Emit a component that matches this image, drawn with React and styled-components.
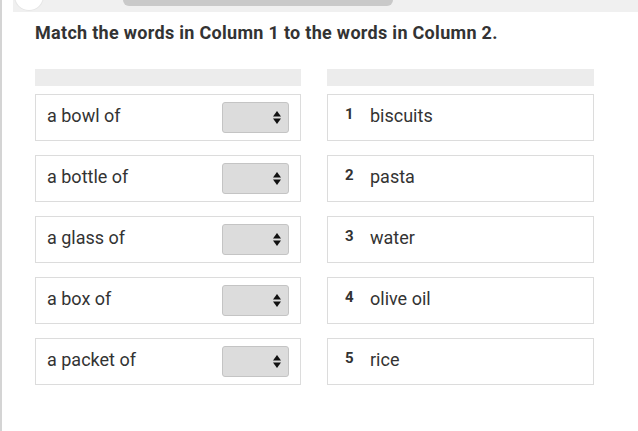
import React from 'react';
import styled, { createGlobalStyle } from 'styled-components';

const GlobalStyle = createGlobalStyle`
  html, body {
    margin: 0;
    padding: 0;
    background: #fff;
    font-family: Roboto, "Liberation Sans", Arial, sans-serif;
  }
`;

const Page = styled.div`
  height: 431px;
  overflow: hidden;
  border-left: 2px solid #d4d4d4;
  box-sizing: border-box;
`;

const TopBand = styled.div`
  position: relative;
  height: 12px;
  margin-left: 11px;
  background: #f0f0f0;
`;

const Pill = styled.div`
  position: absolute;
  left: 110px;
  top: 0;
  width: 270px;
  height: 6px;
  background: #c9c9c9;
  border-radius: 0 0 6px 6px;
`;

const Circle = styled.div`
  position: absolute;
  left: 2px;
  top: -18px;
  width: 28px;
  height: 28px;
  border-radius: 50%;
  background: #fff;
  box-shadow: 0 0 0 1px #e6e6e6;
`;

const Content = styled.div`
  padding-left: 33px;
  width: 559px;
`;

const Title = styled.h1`
  margin: 11px 0 26px;
  font-size: 18px;
  line-height: 20px;
  letter-spacing: 0.3px;
  font-weight: 700;
  color: #333;
`;

const Columns = styled.div`
  display: grid;
  grid-template-columns: 266px 267px;
  column-gap: 26px;
`;

const Column = styled.div`
  display: flex;
  flex-direction: column;
  gap: 14px;
`;

const Header = styled.div`
  height: 17px;
  background: #ececec;
  margin-bottom: -6px;
`;

const Item = styled.div`
  height: 47px;
  box-sizing: border-box;
  border: 1px solid #dcdcdc;
  display: flex;
  align-items: center;
  padding: 0 11px 0 ${p => p.$pad}px;
  font-size: 18px;
  color: #333;
`;

const Label = styled.span`
  flex: 1;
  margin-top: -5px;
`;

const Select = styled.div`
  width: 67px;
  height: 31px;
  box-sizing: border-box;
  background: #dcdcdc;
  border: 1px solid #c4c4c4;
  border-radius: 3px;
  display: flex;
  align-items: center;
  justify-content: flex-end;
  padding-right: 7px;
`;

const Num = styled.span`
  width: 25px;
  font-size: 15px;
  font-weight: 700;
  color: #333;
  margin-top: -8px;
`;

const Arrows = () => (
  <svg width="8" height="13" viewBox="0 0 8 13">
    <path d="M4 0 L8 5.5 L0 5.5 Z" fill="#111" />
    <path d="M0 7.5 L8 7.5 L4 13 Z" fill="#111" />
  </svg>
);

const left = ['a bowl of', 'a bottle of', 'a glass of', 'a box of', 'a packet of'];
const right = ['biscuits', 'pasta', 'water', 'olive oil', 'rice'];

export default function App() {
  return (
    <Page>
      <GlobalStyle />
      <TopBand>
        <Circle />
        <Pill />
      </TopBand>
      <Content>
        <Title>Match the words in Column 1 to the words in Column 2.</Title>
        <Columns>
          <Column>
            <Header />
            {left.map(w => (
              <Item key={w} $pad={11}>
                <Label>{w}</Label>
                <Select><Arrows /></Select>
              </Item>
            ))}
          </Column>
          <Column>
            <Header />
            {right.map((w, i) => (
              <Item key={w} $pad={17}>
                <Num>{i + 1}</Num>
                <Label>{w}</Label>
              </Item>
            ))}
          </Column>
        </Columns>
      </Content>
    </Page>
  );
}
